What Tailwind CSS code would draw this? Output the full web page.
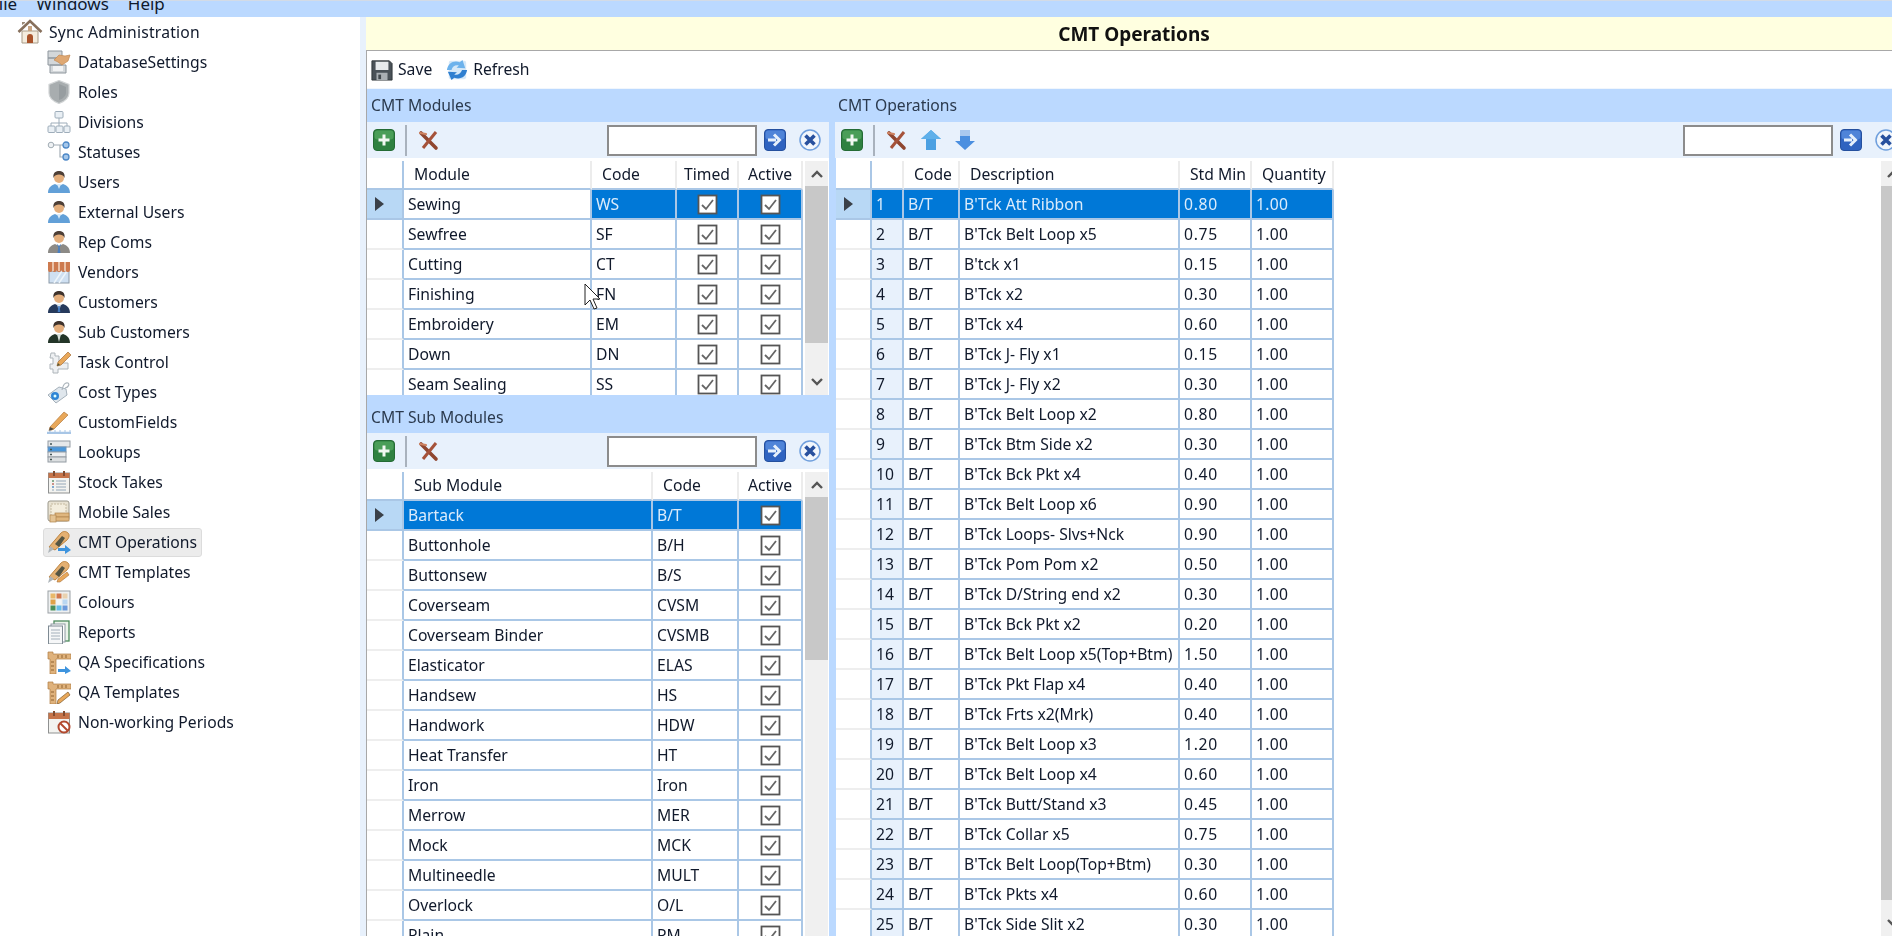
<!DOCTYPE html>
<html lang="en">
<head>
    <meta charset="UTF-8">
    <title>CMT Operations</title>
    <script src="https://cdn.jsdelivr.net/npm/@tailwindcss/browser@4"></script>
</head>
<body class="bg-white">
    <!-- shared icons -->
    <svg width="0" height="0" class="absolute">
        <symbol id="home" viewBox="0 0 26 26"><path d="M5 12h16v12H5z" fill="#f4ecdd" stroke="#a99c88"/><path d="M1.500 13L13 2l11.500 11" fill="none" stroke="#87705c" stroke-width="2.600"/><path d="M5 6V3h3v1" fill="#9b8a78"/><path d="M10 24v-6a3 3 0 016 0v6z" fill="#a9532a"/><rect x="11" y="7" width="4" height="5" fill="#c9a583"/></symbol>
        <symbol id="db" viewBox="0 0 24 24"><path d="M1 1h14v7H1zM1 8h14v7H1zM3 15h16v8H3z" fill="#d3d7da" stroke="#8f979e"/><path d="M6 16h10v5H6z" fill="#f2f3f4"/><path d="M7 10l5-5 6 1 5-1-2 6-6 4-4-3z" fill="#dfa873" stroke="#c48a52" stroke-width=".7"/></symbol>
        <symbol id="shield" viewBox="0 0 24 24"><path d="M12 .5l10 4v8.500c0 5-4.500 8.500-10 10.500C6.500 21.500 2 18 2 13V4.500z" fill="#a8adaf" stroke="#d2d5d6" stroke-width="1.200"/><path d="M12 4l7 3v6c0 3-3.500 6-7 7z" fill="#979da0"/></symbol>
        <symbol id="divisions" viewBox="0 0 24 24"><path d="M12 8v5M4 16v-3h16v3M12 13v3" fill="none" stroke="#9eadba"/><rect x="8" y="1.500" width="8" height="6.500" rx="1" fill="#e9eff4" stroke="#9eadba"/><rect x="1" y="16" width="7" height="6.500" rx="1" fill="#e9eff4" stroke="#9eadba"/><rect x="9" y="16" width="7" height="6.500" rx="1" fill="#e9eff4" stroke="#9eadba"/><rect x="17" y="16" width="6" height="6.500" rx="1" fill="#e9eff4" stroke="#9eadba"/></symbol>
        <symbol id="statuses" viewBox="0 0 24 24"><path d="M6 5h7v12h6M13 5h6" fill="none" stroke="#a4aeb6" stroke-width="1.200"/><circle cx="4" cy="5" r="2.800" fill="#eef1f3" stroke="#a0abb3"/><circle cx="19" cy="5" r="3" fill="#a5c7ea" stroke="#4d88c7" stroke-width="1.300"/><circle cx="19" cy="17" r="3" fill="#a5c7ea" stroke="#4d88c7" stroke-width="1.300"/></symbol>
        <symbol id="user-blue" viewBox="0 0 24 24"><path d="M1 23c0-6 4-8 7-9l4 2 4-2c3 1 7 3 7 9z" fill="#62a0d8"/><path d="M10 14l2 5 2-5z" fill="#dcecf8"/><circle cx="12" cy="8" r="5" fill="#e4ae7c"/><path d="M6.500 8c-1-6 3-7 5.500-7s6.500 1 5.500 7c-1-3-3-3.500-5.500-3.500S7.500 5 6.500 8z" fill="#4e3f36"/></symbol>
        <symbol id="user-grey" viewBox="0 0 24 24"><path d="M1 23c0-6 4-8 7-9l4 2 4-2c3 1 7 3 7 9z" fill="#8c8a86"/><path d="M10 14l2 2 2-2v1l-1.300 2 .8 6h-3l.8-6L10 15z" fill="#4b7fbe"/><circle cx="12" cy="8" r="5" fill="#e4ae7c"/><path d="M6.500 8c-1-6 3-7 5.500-7s6.500 1 5.500 7c-1-3-3-3.500-5.500-3.500S7.500 5 6.500 8z" fill="#4e3f36"/></symbol>
        <symbol id="user-navy" viewBox="0 0 24 24"><path d="M1 23c0-6 4-8 7-9l4 2 4-2c3 1 7 3 7 9z" fill="#263a5c"/><path d="M10 14l2 8 2-8z" fill="#dfe8f0"/><path d="M11.300 16h1.400l.6 6h-2.600z" fill="#3f78c0"/><circle cx="12" cy="8" r="5" fill="#e4ae7c"/><path d="M6.500 8c-1-6 3-7 5.500-7s6.500 1 5.500 7c-1-3-3-3.500-5.500-3.500S7.500 5 6.500 8z" fill="#3f322b"/></symbol>
        <symbol id="user-green" viewBox="0 0 24 24"><path d="M1 23c0-6 4-8 7-9l4 2 4-2c3 1 7 3 7 9z" fill="#233528"/><path d="M10 14l2 8 2-8z" fill="#d9e2dc"/><circle cx="12" cy="8" r="5" fill="#e4ae7c"/><path d="M6.500 8c-1-6 3-7 5.500-7s6.500 1 5.500 7c-1-3-3-3.500-5.500-3.500S7.500 5 6.500 8z" fill="#3f322b"/></symbol>
        <symbol id="vendor" viewBox="0 0 24 24"><rect x="2" y="11" width="20" height="12" fill="#cfe0f2" stroke="#8b9aa8"/><path d="M7 23l8-12M12 23l8-12" stroke="#eef5fb" stroke-width="1.500"/><path d="M1 2h22v8a2 2 0 01-2.200 2 2 2 0 01-2.200-2 2 2 0 01-2.200 2 2.200 2.200 0 01-2.200-2 2.200 2.200 0 01-2.200 2 2.200 2.200 0 01-2.200-2 2.200 2.200 0 01-2.200 2 2 2 0 01-2.200-2 2 2 0 01-2.200 2A2 2 0 011 10z" fill="#cd7a4e"/><path d="M6 2v9M12 2v9M18 2v9" stroke="#f2d5c0" stroke-width="1.600"/></symbol>
        <symbol id="task" viewBox="0 0 24 24"><path d="M4 3h4v3h4v7h9v6H11v4H6v-4H3v-5h3V8H3z" fill="#eef0f2" stroke="#aeb5ba"/><path d="M10 16l1-4L21 2l3 3-10 10z" fill="#e9a85a" stroke="#a8703a" stroke-width=".7"/><path d="M10 16l1-3 2 2z" fill="#553"/></symbol>
        <symbol id="tag" viewBox="0 0 24 24"><path d="M1 15L12 7l7 2 1 6-11 8z" fill="#dfe6ec" stroke="#a4b0ba"/><circle cx="8" cy="16" r="4" fill="#2f85d6"/><circle cx="8" cy="16" r="1.500" fill="#dff"/><path d="M15 10c1-5 3-8 6-7 2 1 0 5-3 5" fill="none" stroke="#aab3ba" stroke-width="1.200"/></symbol>
        <symbol id="pencil" viewBox="0 0 24 24"><path d="M3 17L17 2l4 3L7 19l-5 2z" fill="#e9a85a" stroke="#b57b3e" stroke-width=".7"/><path d="M2 21l1-4 4 2z" fill="#514a40"/><path d="M0 23h24" stroke="#a8c6e6" stroke-width="2.500"/><path d="M3 20v2M8 20v2M13 20v2M18 20v2M23 20v2" stroke="#a8c6e6"/></symbol>
        <symbol id="lookups" viewBox="0 0 24 24"><rect x="1" y="1" width="22" height="6" fill="#e5e7e9" stroke="#949ca3"/><rect x="1" y="7" width="18" height="5" fill="#4b97da" stroke="#6a94bd"/><rect x="1" y="12" width="18" height="5" fill="#eceef0" stroke="#949ca3"/><rect x="1" y="17" width="18" height="5" fill="#dcdfe1" stroke="#949ca3"/><path d="M3 9.500h2M3 14.500h2M3 19.500h2M3 4h2" stroke="#455" stroke-width="1.300"/></symbol>
        <symbol id="calendar" viewBox="0 0 24 24"><rect x="1.500" y="3" width="21" height="20" fill="#f3f3f0" stroke="#8f9191"/><path d="M1.500 3h21v5h-21z" fill="#c5744a"/><path d="M7 1v5M17 1v5" stroke="#814c30" stroke-width="2"/><path d="M5 11h2M9 11h10M5 14h2M9 14h10M5 17h2M9 17h10M5 20h2M9 20h10" stroke="#94a7b8"/><path d="M5 11h2" stroke="#4a8c4a"/><path d="M5 14h2" stroke="#d2553d"/><path d="M5 17h2" stroke="#3f85cc"/></symbol>
        <symbol id="mobile" viewBox="0 0 24 24"><rect x="1" y="1" width="21" height="20" rx="2" fill="#e9e3d3" stroke="#9b988c"/><rect x="4" y="4" width="15" height="12" fill="#f3eddd" stroke="#c4b99f" stroke-dasharray="2 1"/><rect x="8" y="13" width="14" height="4" fill="#dfb67e" stroke="#b0834c" stroke-width=".7"/><rect x="8" y="17" width="14" height="4" fill="#dfb67e" stroke="#b0834c" stroke-width=".7"/><rect x="3" y="15" width="6" height="7" fill="#e4c394" stroke="#b0834c" stroke-width=".7"/></symbol>
        <symbol id="cmt-arrow" viewBox="0 0 24 24"><path d="M2 17L14 3c2-2 5-2 7 0s1 5-1 7L8 20z" fill="#e4b072" stroke="#bd8440"/><path d="M8 14l7-8 3 2-6 9z" fill="#554"/><path d="M1 23l2-7 4 3z" fill="#adb4b9"/><path d="M11 18h7v-3l6 5-6 4v-3h-7z" fill="#3e94de"/></symbol>
        <symbol id="cmt-pencil" viewBox="0 0 24 24"><path d="M2 17L14 3c2-2 5-2 7 0s1 5-1 7L8 20z" fill="#e4b072" stroke="#bd8440"/><path d="M8 14l7-8 3 2-6 9z" fill="#554"/><path d="M1 23l2-7 4 3z" fill="#adb4b9"/><path d="M10 22l1-3 9-7 2 3-9 7z" fill="#e9a85a" stroke="#a8703a" stroke-width=".6"/></symbol>
        <symbol id="colours" viewBox="0 0 24 24"><rect x="1" y="1" width="22" height="22" fill="#eef0f1" stroke="#9ba1a6"/><rect x="3.500" y="3.500" width="5" height="5" fill="#e9b96a"/><rect x="9.500" y="3.500" width="5" height="5" fill="#d2794d"/><rect x="15.500" y="3.500" width="5" height="5" fill="#e9d2b0"/><rect x="3.500" y="9.500" width="5" height="5" fill="#dfa24a"/><rect x="9.500" y="9.500" width="5" height="5" fill="#f4f6f8"/><rect x="15.500" y="9.500" width="5" height="5" fill="#b9d7f2"/><rect x="3.500" y="15.500" width="5" height="5" fill="#4a8f5a"/><rect x="9.500" y="15.500" width="5" height="5" fill="#66bde9"/><rect x="15.500" y="15.500" width="5" height="5" fill="#6c9adb"/></symbol>
        <symbol id="reports" viewBox="0 0 24 24"><rect x="7" y="1" width="15" height="20" fill="#eaf3ea" stroke="#4d8a5d" stroke-width="1.300"/><rect x="4" y="4" width="14" height="18" fill="#fff" stroke="#8f9aa3"/><rect x="1.500" y="6" width="14" height="18" fill="#f6f7f8" stroke="#7e8a93"/><path d="M4 10h9M4 13h9M4 16h9M4 19h9" stroke="#a4b0bb"/></symbol>
        <symbol id="qa-arrow" viewBox="0 0 24 24"><path d="M1 2h5v2h18v5H9v15H3V9H1z" fill="#dfb27c" stroke="#b07d43" stroke-width=".7"/><path d="M11 5v3M15 5v3M19 5v3M4 12h3M4 16h3M4 20h3" stroke="#8f6231"/><path d="M11 19h7v-3l6 5-6 3v-2h-7z" fill="#3e94de"/></symbol>
        <symbol id="qa-pencil" viewBox="0 0 24 24"><path d="M1 2h5v2h18v5H9v15H3V9H1z" fill="#dfb27c" stroke="#b07d43" stroke-width=".7"/><path d="M11 5v3M15 5v3M19 5v3M4 12h3M4 16h3M4 20h3" stroke="#8f6231"/><path d="M10 24l1-4 10-8 2 3-10 8z" fill="#e9a85a" stroke="#7c5a2c" stroke-width=".7"/></symbol>
        <symbol id="calendar-no" viewBox="0 0 24 24"><rect x="1.500" y="3" width="21" height="20" fill="#f3f3f0" stroke="#8f9191"/><path d="M1.500 3h21v6h-21z" fill="#c5744a"/><path d="M7 1v5M17 1v5" stroke="#814c30" stroke-width="2"/><circle cx="17" cy="17" r="5.500" fill="#fff" stroke="#b2492f" stroke-width="2"/><path d="M13.500 13.500l7 7" stroke="#b2492f" stroke-width="2"/></symbol>
        <symbol id="save" viewBox="0 0 24 24"><path d="M1 2h19l3 3v18H1z" fill="#4a5258" stroke="#2e3438"/><rect x="5" y="3" width="14" height="9" fill="#e7eaec"/><rect x="6" y="15" width="12" height="8" fill="#a9afb3"/><rect x="8" y="17" width="3" height="5" fill="#41484d"/></symbol>
        <symbol id="refresh" viewBox="0 0 24 24"><rect x="3" y="2" width="19" height="20" rx="2" fill="#d5e8f8"/><path d="M1 12C2 5 8 1 15 3.500L18 1l3 9-9.500-.5 2.500-2.500C10 6 7 8 6 12z" fill="#6cb2ec"/><path d="M23 12c-1 7-7 11-14 8.500L6 23l-4-9 10 .5-3 2.500c4 1 7-1 8.500-5z" fill="#2f7fd0"/></symbol>
        <symbol id="plus" viewBox="0 0 22 22"><rect x="0.500" y="0.500" width="21" height="21" rx="3.500" fill="#2f8141" stroke="#246b35"/><rect x="1.500" y="1.500" width="19" height="9" rx="3" fill="#4a9e58"/><path d="M11 5.500v11M5.500 11h11" stroke="#f2f8f2" stroke-width="3"/></symbol>
        <symbol id="cross" viewBox="0 0 22 22"><path d="M3 4l15 15" stroke="#8f4630" stroke-width="3.600" stroke-linecap="round"/><path d="M18 3L5 19" stroke="#a5523a" stroke-width="3"/><path d="M2 4l6 1" stroke="#cf8463" stroke-width="2.200" stroke-linecap="round"/></symbol>
        <symbol id="go" viewBox="0 0 22 22"><rect x="0.500" y="0.500" width="21" height="21" rx="3.500" fill="#2f63c0" stroke="#25509e"/><rect x="1.500" y="1.500" width="19" height="9" rx="3" fill="#4f84d8"/><path d="M4 11h8M10 5.500l5.500 5.500-5.500 5.500" fill="none" stroke="#e6f0fb" stroke-width="3"/></symbol>
        <symbol id="stop" viewBox="0 0 22 22"><circle cx="11" cy="11" r="10" fill="#f1f6fc" stroke="#6f9fdd" stroke-width="1.500"/><path d="M6.500 6.500l9 9M15.500 6.500l-9 9" stroke="#27509e" stroke-width="3.600"/></symbol>
        <symbol id="up" viewBox="0 0 22 22"><path d="M11 1l10 9h-5v11H6V10H1z" fill="#4ba0e2"/><path d="M11 1l10 9H1z" fill="#5fb0ea"/></symbol>
        <symbol id="down" viewBox="0 0 22 22"><path d="M6 1h10v11h5L11 21 1 12h5z" fill="#4b8fe0"/><path d="M6 1h10v6H6z" fill="#a9c8ef"/></symbol>
    </svg>

    <div id="app" class="relative w-[1892px] h-[936px] overflow-hidden flex flex-col text-[15.7px] text-[#10192b] blur-[0.35px]" style="font-family:'Noto Sans',sans-serif">
        <div class="h-[17px] shrink-0 bg-[#bbd9ff] border-t border-[#d3dbe6] overflow-hidden">
            <div class="flex -mt-[10px] -ml-[10px] gap-[19px] text-[17px]">
                <span>File</span><span>Windows</span><span>Help</span>
            </div>
        </div>
        <div class="flex flex-1 min-h-0">
            <aside id="tree" class="w-[360px] shrink-0"></aside>
            <div class="w-[6px] shrink-0 bg-[#e8f1fc]"></div>
            <main class="flex-1 min-w-0 flex flex-col">
                <div class="h-[34px] shrink-0 bg-[#ffffe0] border-b border-[#a8a8a8] overflow-hidden">
                    <div class="w-[1536px] h-[33px] pt-[2px] flex items-center justify-center font-bold text-[19px] text-[#111]">CMT Operations</div>
                </div>
                <div class="flex-1 min-h-0 flex flex-col border-l border-[#a8a8a8]">
                    <div class="h-[38px] shrink-0 flex items-center pl-[4px] border-b border-[#f0f6fd]">
                        <svg class="w-[22px] h-[22px]"><use href="#save"/></svg>
                        <span class="ml-[5px]">Save</span>
                        <svg class="w-[22px] h-[22px] ml-[14px]"><use href="#refresh"/></svg>
                        <span class="ml-[5px]">Refresh</span>
                    </div>
                    <div class="flex-1 min-h-0 flex bg-[#bbd9ff]">
                        <div id="left" class="w-[468px] shrink-0 flex flex-col"></div>
                        <div id="right" class="flex-1 min-w-0 flex flex-col"></div>
                    </div>
                </div>
            </main>
        </div>
        <!-- mouse pointer over the grid -->
        <svg class="absolute left-[584px] top-[283px] w-[17px] h-[27px]" viewBox="0 0 17 27"><path d="M1 1v21l5-5 4 9 3-1-4-9h7z" fill="#fff" stroke="#222"/></svg>
    </div>

    <script>
        var tree = [
            ["db", "DatabaseSettings"], ["shield", "Roles"], ["divisions", "Divisions"], ["statuses", "Statuses"],
            ["user-blue", "Users"], ["user-blue", "External Users"], ["user-grey", "Rep Coms"], ["vendor", "Vendors"],
            ["user-navy", "Customers"], ["user-green", "Sub Customers"], ["task", "Task Control"], ["tag", "Cost Types"],
            ["pencil", "CustomFields"], ["lookups", "Lookups"], ["calendar", "Stock Takes"], ["mobile", "Mobile Sales"],
            ["cmt-arrow", "CMT Operations"], ["cmt-pencil", "CMT Templates"], ["colours", "Colours"], ["reports", "Reports"],
            ["qa-arrow", "QA Specifications"], ["qa-pencil", "QA Templates"], ["calendar-no", "Non-working Periods"]
        ];

        var modules = [["Sewing", "WS"], ["Sewfree", "SF"], ["Cutting", "CT"], ["Finishing", "FN"], ["Embroidery", "EM"], ["Down", "DN"], ["Seam Sealing", "SS"]];
        var subModules = [["Bartack", "B/T"], ["Buttonhole", "B/H"], ["Buttonsew", "B/S"], ["Coverseam", "CVSM"], ["Coverseam Binder", "CVSMB"], ["Elasticator", "ELAS"], ["Handsew", "HS"], ["Handwork", "HDW"], ["Heat Transfer", "HT"], ["Iron", "Iron"], ["Merrow", "MER"], ["Mock", "MCK"], ["Multineedle", "MULT"], ["Overlock", "O/L"], ["Plain", "PM"]];
        var operations = [
            ["B'Tck Att Ribbon", "0.80"], ["B'Tck Belt Loop x5", "0.75"], ["B'tck x1", "0.15"], ["B'Tck x2", "0.30"], ["B'Tck x4", "0.60"],
            ["B'Tck J- Fly x1", "0.15"], ["B'Tck J- Fly x2", "0.30"], ["B'Tck Belt Loop x2", "0.80"], ["B'Tck Btm Side x2", "0.30"], ["B'Tck Bck Pkt x4", "0.40"],
            ["B'Tck Belt Loop x6", "0.90"], ["B'Tck Loops- Slvs+Nck", "0.90"], ["B'Tck Pom Pom x2", "0.50"], ["B'Tck D/String end x2", "0.30"], ["B'Tck Bck Pkt x2", "0.20"],
            ["B'Tck Belt Loop x5(Top+Btm)", "1.50"], ["B'Tck Pkt Flap x4", "0.40"], ["B'Tck Frts x2(Mrk)", "0.40"], ["B'Tck Belt Loop x3", "1.20"], ["B'Tck Belt Loop x4", "0.60"],
            ["B'Tck Butt/Stand x3", "0.45"], ["B'Tck Collar x5", "0.75"], ["B'Tck Belt Loop(Top+Btm)", "0.30"], ["B'Tck Pkts x4", "0.60"], ["B'Tck Side Slit x2", "0.30"]
        ];

        function icon(name, cls) {
            return '<svg class="' + cls + '"><use href="#' + name + '"/></svg>';
        }

        // Sidebar tree
        var treeHtml = '<div class="h-[30px] flex items-center pl-[17px]">' + icon("home", "w-[26px] h-[26px]") + '<span class="ml-[6px] pt-[2px] tracking-[0.2px]">Sync Administration</span></div>';
        tree.forEach(function (item) {
            var active = item[1] == "CMT Operations";
            treeHtml += '<div class="h-[30px] flex items-center pl-[43px]"><div class="flex items-center h-[29px] pl-[3px] pr-[4px] rounded-[3px] border ' + (active ? 'bg-[#ececec] border-[#dcdcdc]' : 'border-transparent') + '">'
                + icon(item[0], "w-[24px] h-[24px]") + '<span class="ml-[7px] pt-[2px]">' + item[1] + '</span></div></div>';
        });
        document.getElementById("tree").innerHTML = treeHtml;

        function checkbox() {
            return '<svg class="w-[21px] h-[21px] mx-auto block" viewBox="0 0 21 21"><rect x="1.500" y="1.500" width="18" height="18" fill="#fff" stroke="#555" stroke-width="1.800"/><path d="M5 11l4 4 7-9" fill="none" stroke="#666" stroke-width="1.800"/></svg>';
        }

        function toolbar(extra, searchCls, closeCls) {
            return '<div class="h-[36px] shrink-0 flex items-center bg-[#e8f1fc] pl-[6px] ' + searchCls + '">'
                + icon("plus", "w-[22px] h-[22px]")
                + '<div class="w-[2px] h-[31px] bg-[#a9b2bd] ml-[10px]"></div>'
                + icon("cross", "w-[22px] h-[22px] ml-[11px]") + extra
                + '<div class="ml-auto w-[150px] h-[31px] bg-white border-2 border-[#8c8c8c]"></div>'
                + icon("go", "w-[22px] h-[22px] ml-[7px]")
                + icon("stop", "w-[22px] h-[22px] ml-[13px] shrink-0 " + closeCls)
                + '</div>';
        }

        function scrollbar(thumb, cls, showDown) {
            return '<div class="w-[23px] shrink-0 flex flex-col items-stretch bg-[#f0f0f0] ' + cls + '">'
                + '<div class="h-[25px] shrink-0 flex items-center justify-center"><svg class="w-[12px] h-[8px]" viewBox="0 0 12 8"><path d="M1 7l5-5 5 5" fill="none" stroke="#555" stroke-width="2.400"/></svg></div>'
                + '<div class="bg-[#c8c8c8] shrink-0" style="height:' + thumb + 'px"></div><div class="flex-1"></div>'
                + (showDown ? '<div class="h-[26px] shrink-0 flex items-center justify-center"><svg class="w-[12px] h-[8px]" viewBox="0 0 12 8"><path d="M1 1l5 5 5-5" fill="none" stroke="#555" stroke-width="2.400"/></svg></div>' : '')
                + '</div>';
        }

        // cols: [header, width, header alignment class]
        function grid(cols, rows, drawCell) {
            var html = '<table class="table-fixed border-separate border-spacing-0 shrink-0 self-start" style="width:' + cols.reduce(function (a, c) { return a + c[1]; }, 0) + 'px"><colgroup>';
            cols.forEach(function (c) { html += '<col style="width:' + c[1] + 'px">'; });
            html += '</colgroup><thead><tr>';
            cols.forEach(function (c, i) {
                var edge = i == 0 ? 'border-r-2 border-r-[#aac7e6]' : 'border-r-2 border-r-[#ececec]';
                html += '<th class="h-[29px] p-0 font-normal border-b-2 border-b-[#aac7e6] bg-white ' + edge + ' ' + (c[2] || 'text-left pl-[10px]') + '">' + c[0] + '</th>';
            });
            html += '</tr></thead><tbody>';
            rows.forEach(function (row, r) {
                html += '<tr>';
                cols.forEach(function (c, i) { html += drawCell(row, r, i); });
                html += '</tr>';
            });
            return html + '</tbody></table>';
        }

        var cellBase = 'h-[30px] p-0 border-b-2 border-r-2 border-[#aac7e6] whitespace-nowrap overflow-hidden ';
        var rowHead = function (selected) {
            return selected
                ? '<td class="h-[30px] p-0 border-b-2 border-r-2 border-b-[#aac7e6] border-r-[#aac7e6] bg-[#b8d8f5]"><svg class="w-[9px] h-[14px] ml-[8px] block" viewBox="0 0 9 14"><path d="M0 0l9 7-9 7z" fill="#3a4048"/></svg></td>'
                : '<td class="h-[30px] p-0 border-b-2 border-r-2 border-b-[#eeeeee] border-r-[#aac7e6] bg-white"></td>';
        };

        function textCell(text, selected, extra) {
            return '<td class="' + cellBase + 'pt-[2px] ' + (selected ? 'bg-[#0078d7] text-[#dcecfb] ' : 'bg-white ') + (extra || 'pl-[4px]') + '">' + text + '</td>';
        }
        function checkCell(selected) {
            return '<td class="' + cellBase + (selected ? 'bg-[#0078d7]' : 'bg-white') + '">' + checkbox() + '</td>';
        }

        var center = 'text-center';
        var modulesGrid = grid([["", 37], ["Module", 188], ["Code", 85], ["Timed", 62, center], ["Active", 64, center]], modules, function (row, r, i) {
            var sel = r == 0;
            if (i == 0) return rowHead(sel);
            if (i == 1) return textCell(row[0], false);
            if (i == 2) return textCell(row[1], sel);
            return checkCell(sel);
        });
        var subGrid = grid([["", 37], ["Sub Module", 249], ["Code", 86], ["Active", 64, center]], subModules, function (row, r, i) {
            var sel = r == 0;
            if (i == 0) return rowHead(sel);
            if (i == 3) return checkCell(sel);
            return textCell(row[i - 1], sel);
        });
        var opsGrid = grid([["", 36], ["", 32], ["Code", 56], ["Description", 220], ["Std Min", 72], ["Quantity", 82]], operations, function (row, r, i) {
            var sel = r == 0;
            if (i == 0) return rowHead(sel);
            if (i == 1) return '<td class="' + cellBase + 'pt-[2px] pl-[4px] ' + (sel ? 'bg-[#0078d7] text-[#dcecfb]' : 'bg-[#e8f1fc]') + '">' + (r + 1) + '</td>';
            if (i == 2) return textCell("B/T", sel);
            if (i == 3) return textCell(row[0], sel);
            if (i == 4) return textCell(row[1], sel, 'pl-[4px] tracking-[0.7px]');
            return textCell("1.00", sel, 'pl-[4px] tracking-[0.3px]');
        });

        document.getElementById("left").innerHTML =
            '<div class="h-[33px] shrink-0 flex items-center pl-[4px] text-[#2b3a4e]">CMT Modules</div>'
            + toolbar('', 'mr-[6px] pr-[8px]', '')
            + '<div class="h-[237px] shrink-0 mr-[6px] bg-white pt-[3px] flex overflow-hidden">' + modulesGrid + '<div class="w-[2px] shrink-0"></div>' + scrollbar(157, '', true) + '<div class="w-[1px] shrink-0"></div></div>'
            + '<div class="h-[38px] shrink-0 flex items-center pl-[4px] pt-[8px] text-[#2b3a4e]">CMT Sub Modules</div>'
            + toolbar('', 'mr-[6px] pr-[8px]', '')
            + '<div class="flex-1 min-h-0 mr-[6px] bg-white pt-[3px] flex overflow-hidden">' + subGrid + '<div class="w-[2px] shrink-0"></div>' + scrollbar(163, '', false) + '<div class="w-[1px] shrink-0"></div></div>';

        var moveButtons = icon("up", "w-[22px] h-[22px] ml-[12px]") + icon("down", "w-[22px] h-[22px] ml-[12px]");
        document.getElementById("right").innerHTML =
            '<div class="h-[33px] shrink-0 flex items-center pl-[3px] text-[#2b3a4e]">CMT Operations</div>'
            + toolbar(moveButtons, '', '-mr-[5px]')
            + '<div class="flex-1 min-h-0 bg-white border-l border-[#bbd9ff] pt-[3px] flex overflow-hidden">' + opsGrid + '<div class="flex-1"></div>' + scrollbar(714, '-mr-[12px]', true) + '</div>';
    </script>
</body>
</html>
